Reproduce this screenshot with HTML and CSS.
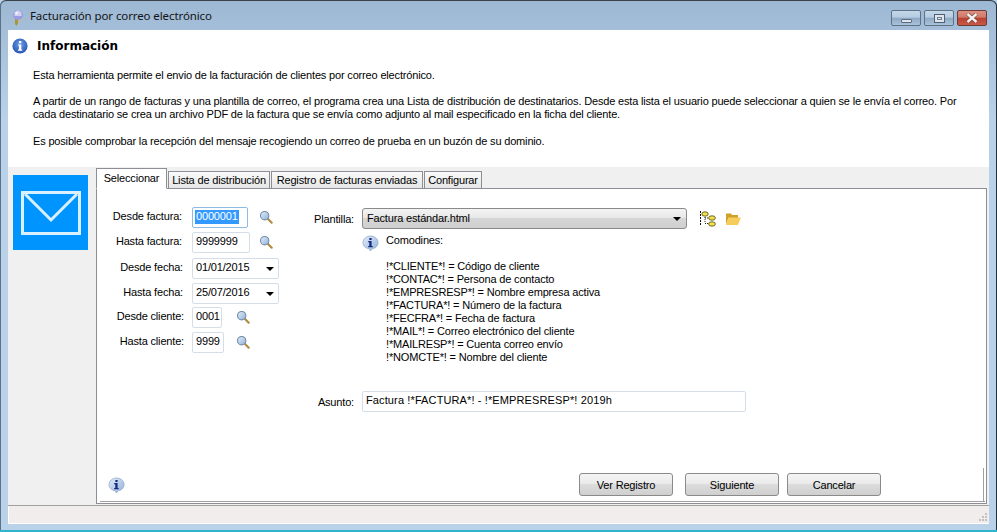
FILE: index.html
```html
<!DOCTYPE html>
<html lang="es">
<head>
<meta charset="utf-8">
<title>Facturación por correo electrónico</title>
<link rel="stylesheet" href="styles.css">
</head>
<body>
<div class="window">
  <header class="titlebar">
    <svg class="app-icon" width="12" height="17" viewBox="0 0 12 17"><path d="M3 10h3v4l-1.5 3L3 15z" fill="#a3983c"/><path d="M6 11l4-1v2l-4 2z" fill="#bdb9a4"/><circle cx="6" cy="6" r="5" fill="#9c9ce0"/><path d="M2.5 3.5L6 1l3.5 2.5V7h-7z" fill="#cfcff0"/><circle cx="4.6" cy="4" r="1.5" fill="#f0f0fb"/></svg>
    <span class="title-text">Facturación por correo electrónico</span>
    <div class="caption-buttons">
      <div class="cap cap-min"><span class="glyph-min"></span></div>
      <div class="cap cap-max"><span class="glyph-max"></span></div>
      <div class="cap cap-close"><svg width="14" height="10" viewBox="0 0 14 10"><path d="M2.5 1L11.5 9M11.5 1L2.5 9" stroke="#5e3833" stroke-width="3.6" fill="none"/><path d="M2.5 1L11.5 9M11.5 1L2.5 9" stroke="#f4f0f0" stroke-width="2.4" fill="none"/></svg></div>
    </div>
  </header>
  <div class="client">
    <section class="info">
      <div class="info-head">
        <svg width="16" height="16" viewBox="0 0 16 16"><defs><radialGradient id="ib" cx="50%" cy="40%" r="65%"><stop offset="0" stop-color="#6f9fe8"/><stop offset="1" stop-color="#1f4fb0"/></radialGradient></defs><circle cx="8" cy="8" r="7.6" fill="url(#ib)"/><rect x="6.9" y="3" width="2.4" height="2.2" fill="#fff"/><path d="M6 6.4h3.3v5.2h1v1.2H6v-1.2h1V7.6H6z" fill="#fff"/></svg>
        <h1>Información</h1>
      </div>
      <p class="p1">Esta herramienta permite el envio de la facturación de clientes por correo electrónico.</p>
      <p class="p2">A partir de un rango de facturas y una plantilla de correo, el programa crea una Lista de distribución de destinatarios. Desde esta lista el usuario puede seleccionar a quien se le envía el correo. Por cada destinatario se crea un archivo PDF de la factura que se envía como adjunto al mail especificado en la ficha del cliente.</p>
      <p class="p3">Es posible comprobar la recepción del mensaje recogiendo un correo de prueba en un buzón de su dominio.</p>
    </section>
    <div class="main">
      <aside class="side">
        <div class="mail-tile"><svg width="60" height="44" viewBox="0 0 60 44"><rect x="1.5" y="1.5" width="57" height="41" fill="none" stroke="#d8f0ff" stroke-width="3"/><path d="M4 3l26 26L56 3" fill="none" stroke="#d8f0ff" stroke-width="3"/></svg></div>
      </aside>
      <div class="tabs-area">
        <nav class="tabs">
          <div class="tab active">Seleccionar</div>
          <div class="tab t-lista">Lista de distribución</div>
          <div class="tab t-reg">Registro de facturas enviadas</div>
          <div class="tab t-conf">Configurar</div>
        </nav>
        <div class="panel">
          <div class="panel-body">
            <div class="form">
              <div class="col-left">
                <div class="row"><label class="lab l1">Desde factura:</label><div class="field w-sel"><span class="sel">0000001</span></div><svg class="lens g11" viewBox="0 0 16 16"><use href="#lens"/></svg></div>
                <div class="row r2"><label class="lab l1">Hasta factura:</label><div class="field w-58">9999999</div><svg class="lens g9" viewBox="0 0 16 16"><use href="#lens"/></svg></div>
                <div class="row r3"><label class="lab l2">Desde fecha:</label><div class="field w-87 date"><span class="date-text">01/01/2015</span><i class="arrow"></i></div></div>
                <div class="row r4"><label class="lab l2">Hasta fecha:</label><div class="field w-87 date"><span class="date-text">25/07/2016</span><i class="arrow"></i></div></div>
                <div class="row r5"><label class="lab l3">Desde cliente:</label><div class="field w-30">0001</div><svg class="lens g14" viewBox="0 0 16 16"><use href="#lens"/></svg></div>
                <div class="row r6"><label class="lab l3">Hasta cliente:</label><div class="field w-32">9999</div><svg class="lens g12" viewBox="0 0 16 16"><use href="#lens"/></svg></div>
              </div>
              <div class="col-right">
                <div class="tpl-row">
                  <label class="lab-tpl">Plantilla:</label>
                  <div class="combo"><span class="combo-text">Factura estándar.html</span><i class="arrow"></i></div>
                  <svg class="tree" width="18" height="16" viewBox="0 0 18 16"><path d="M1.5 0v15" stroke="#111" stroke-dasharray="2 1" fill="none"/><path d="M6 4v8M6 7h4M6 12.5h4" stroke="#222" stroke-dasharray="1 1" fill="none"/><ellipse cx="6" cy="3" rx="3.2" ry="2.2" fill="#f4e04a" stroke="#5a5a20" stroke-width=".9"/><ellipse cx="13" cy="7" rx="3.4" ry="2.2" fill="#f4e04a" stroke="#5a5a20" stroke-width=".9"/><ellipse cx="13" cy="13" rx="3.4" ry="2.2" fill="#f4e04a" stroke="#5a5a20" stroke-width=".9"/></svg>
                  <svg class="folder" width="16" height="14" viewBox="0 0 16 14"><path d="M1 1.5h5l1 1.5h6v3H3.5L1 12.5z" fill="#cfa02c"/><path d="M3.5 5.5H16L13 13H1z" fill="#f6cd5a"/></svg>
                </div>
                <div class="wild">
                  <svg class="bubble" width="17" height="17" viewBox="0 0 17 17"><use href="#bubble"/></svg>
                  <div class="wild-text">
                    <div class="wild-title">Comodines:</div>
                    <div>!*CLIENTE*! = Código de cliente</div>
                    <div>!*CONTAC*! = Persona de contacto</div>
                    <div>!*EMPRESRESP*! = Nombre empresa activa</div>
                    <div>!*FACTURA*! = Número de la factura</div>
                    <div>!*FECFRA*! = Fecha de factura</div>
                    <div>!*MAIL*! = Correo electrónico del cliente</div>
                    <div>!*MAILRESP*! = Cuenta correo envío</div>
                    <div>!*NOMCTE*! = Nombre del cliente</div>
                  </div>
                </div>
                <div class="subject-row">
                  <label class="lab-sub">Asunto:</label>
                  <div class="field subject">Factura !*FACTURA*! - !*EMPRESRESP*! 2019h</div>
                </div>
              </div>
            </div>
            <div class="actions">
              <svg class="bubble" width="17" height="17" viewBox="0 0 17 17"><use href="#bubble"/></svg>
              <div class="buttons">
                <button class="btn" type="button">Ver Registro</button>
                <button class="btn" type="button">Siguiente</button>
                <button class="btn" type="button">Cancelar</button>
              </div>
            </div>
          </div>
        </div>
      </div>
    </div>
    <footer class="status">
      <svg class="grip" width="9" height="9" viewBox="0 0 9 9"><path d="M6 0h2v2H6zM3 3h2v2H3zM6 3h2v2H6zM0 6h2v2H0zM3 6h2v2H3zM6 6h2v2H6z" fill="#c4c0bd"/></svg>
    </footer>
  </div>
</div>
<svg class="defs" width="0" height="0">
  <defs>
    <linearGradient id="lg" x1="0" y1="0" x2="1" y2="1"><stop offset="0" stop-color="#e4eefa"/><stop offset="1" stop-color="#8fb0d8"/></linearGradient>
    <g id="lens"><path d="M9.5 9.5L14.5 14.5" stroke="#b08a40" stroke-width="2.4" stroke-linecap="round"/><circle cx="6.5" cy="6.5" r="4.8" fill="url(#lg)" stroke="#6f8aa8" stroke-width="1.2"/></g>
    <g id="bubble"><path d="M8.5 1C12.6 1 16 3.6 16 7.5S12.8 13.6 10.5 13.6L8.3 16 7.4 13.6C3.6 13.4 1 11 1 7.5S4.4 1 8.5 1z" fill="url(#lg)" stroke="#93a9c8" stroke-width=".8"/><rect x="7.4" y="3" width="2.2" height="2" fill="#142a80"/><path d="M6.2 6h3.4v5h1.1v1.2H6.2V11h1.1V7.2H6.2z" fill="#142a80"/></g>
  </defs>
</svg>
</body>
</html>
```
FILE: styles.css
```css
* { box-sizing: border-box; }
html, body { margin: 0; padding: 0; height: 100%; overflow: hidden; }
body { font-family: "Liberation Sans", Arial, sans-serif; font-size: 11px; letter-spacing: -0.17px; color: #000; background: #b9d2ea; }
.defs { position: absolute; }
.window { width: 997px; height: 532px; display: flex; flex-direction: column; padding: 0 8px 6px; background: linear-gradient(#9db8d3 0, #a5bfda 30px, #b9d2ea 120px); border-top: 1px solid #3a4048; border-bottom: 2px solid #2fb4cf; border-radius: 6px 6px 0 0; box-shadow: inset 1px 0 0 #5b7186, inset -1px 0 0 #22303a; }
.titlebar { height: 29px; flex: none; display: flex; align-items: center; }
.app-icon { margin: 3px 6px 0 4px; flex: none; }
.title-text { font-size: 11.5px; letter-spacing: -0.1px; color: #141414; font-family: "Noto Sans", sans-serif; }
.caption-buttons { margin-left: auto; margin-right: 2px; display: flex; gap: 3px; align-self: flex-start; margin-top: 9px; }
.cap { height: 16px; width: 30px; border: 1px solid #5f7285; border-radius: 2px; display: flex; align-items: center; justify-content: center; background: linear-gradient(#c6d8ea 0, #b4cbe1 45%, #8fa9c4 50%, #a9c3dc 100%); }
.cap-close { background: linear-gradient(#dc8f80 0, #cf7a6a 45%, #b9402e 50%, #c85a46 100%); border-color: #6d3a35; }
.glyph-min { display: block; width: 11px; height: 4px; margin-top: 5px; background: #dde5ee; border: 1px solid #5b6b7c; border-radius: 1px; }
.glyph-max { display: block; width: 11px; height: 9px; border: 1px solid #4f6072; background: #dde5ee; box-shadow: inset 0 0 0 2px #dde5ee, inset 0 0 0 3px #6b7d90; }
.client { flex: 1; min-height: 0; display: flex; flex-direction: column; background: #f0f0f0; }
.info { height: 137px; flex: none; background: #fff; padding: 8px 0 0 4px; }
.info-head { display: flex; align-items: center; gap: 9px; height: 16px; }
.info-head h1 { margin: 0; font: bold 12px "DejaVu Sans", sans-serif; letter-spacing: 0; }
.info p { margin: 14px 0 0; padding-left: 21px; line-height: 13px; width: 960px; }
.info .p1 { margin-top: 15px; }
.info .p2 { margin-top: 13px; }
.main { flex: 1; min-height: 0; display: flex; background: #f0f0f0; border-bottom: 1px solid #a0a0a0; }
.side { width: 88px; flex: none; padding: 8px 0 0 5px; }
.mail-tile { width: 75px; height: 75px; background: #0094fe; display: flex; align-items: center; justify-content: center; }
.tabs-area { flex: 1; min-width: 0; display: flex; flex-direction: column; margin: 1px 2px 1px 0; }
.tabs { display: flex; gap: 1px; height: 21px; flex: none; position: relative; z-index: 1; }
.tab { height: 18px; margin-top: 3px; border: 1px solid #8c8f96; background: linear-gradient(#fafafa, #e6e6e6); line-height: 16px; text-align: center; white-space: nowrap; }
.tab.active { width: 71px; height: 21px; margin-top: 0; background: #fff; border-bottom-color: #fff; line-height: 18px; }
.t-lista { width: 102px; }
.t-reg { width: 152px; }
.t-conf { width: 58px; }
.panel { flex: 1; min-height: 0; background: #fff; border: 1px solid #8c8f96; margin-top: -1px; padding: 0 1px 1px 3px; }
.panel-body { height: 100%; display: flex; flex-direction: column; border-bottom: 1px solid #a0a0a0; }
.form { display: flex; flex: 1; min-height: 0; padding-top: 18px; }
.col-left { width: 196px; flex: none; }
.row { display: flex; align-items: center; height: 21px; }
.r2 { margin-top: 4px; }
.r3 { margin-top: 5px; }
.r4 { margin-top: 4px; }
.r5 { margin-top: 3px; }
.r6 { margin-top: 4px; }
.lab { text-align: right; flex: none; padding-bottom: 4px; }
.l1 { width: 82px; margin-right: 10px; }
.l2 { width: 83px; margin-right: 9px; }
.l3 { width: 84px; margin-right: 8px; }
.field { height: 21px; background: #fff; border: 1px solid #d4dee9; border-radius: 2px; padding: 2px 3px 3px; line-height: 13px; white-space: nowrap; flex: none; }
.w-sel { width: 56px; border-color: #8fbbe0; padding-left: 2px; }
.sel { background: #3399ff; color: #fff; padding: 0 1px; display: inline-block; height: 14px; }
.w-58 { width: 58px; }
.w-87 { width: 87px; }
.w-30 { width: 30px; }
.w-32 { width: 32px; }
.lens { width: 14px; height: 14px; flex: none; margin-top: -2px; }
.g9 { margin-left: 9px; }
.g11 { margin-left: 11px; }
.g12 { margin-left: 12px; }
.g14 { margin-left: 14px; }
.arrow { display: block; flex: none; width: 0; height: 0; border: 4px solid transparent; border-top: 4px solid #000; border-bottom: 0; }
.date { display: flex; align-items: center; justify-content: space-between; padding: 0 4px 0 3px; }
.date-text { margin-top: -2px; }
.col-right { flex: 1; min-width: 0; padding-top: 1px; }
.tpl-row { display: flex; align-items: center; height: 21px; }
.lab-tpl { width: 58px; text-align: right; flex: none; margin-right: 8px; }
.combo { width: 325px; height: 21px; border: 1px solid #8a8a8a; border-radius: 3px; background: linear-gradient(#f4f4f4 0, #e8e8e8 45%, #d6d6d6 50%, #cfcfcf 100%); display: flex; align-items: center; justify-content: space-between; padding: 0 5px 0 4px; }
.combo-text { margin-top: -2px; }
.tree { margin-left: 12px; flex: none; }
.folder { margin-left: 8px; flex: none; }
.wild { display: flex; margin-left: 66px; padding-top: 6px; }
.bubble { flex: none; }
.wild-text { margin: -1px 0 0 7px; line-height: 13px; }
.wild-title { margin-bottom: 13px; }
.subject-row { display: flex; align-items: center; margin-top: 27px; }
.lab-sub { width: 58px; text-align: right; margin-right: 8px; flex: none; }
.subject { width: 384px; letter-spacing: 0.12px; }
.actions { height: 33px; flex: none; display: flex; align-items: flex-start; justify-content: space-between; padding: 5px 0 0 8px; border-right: 1px solid #a0a0a0; margin-right: 1px; }
.actions .bubble { margin-top: 4px; }
.buttons { display: flex; gap: 12px; margin-right: 102px; }
.btn { width: 94px; height: 23px; font: inherit; letter-spacing: inherit; color: #000; border: 1px solid #8a8a8a; border-radius: 3px; background: linear-gradient(#f4f4f4 0, #ebebeb 45%, #dcdcdc 50%, #cfcfcf 100%); padding: 0; }
.btn:last-child { margin-left: -4px; }
.status { height: 18px; flex: none; background: #f0edec; border-bottom: 1px solid #fff; border-left: 1px solid #fff; display: flex; justify-content: flex-end; align-items: flex-end; padding: 0 1px 1px 0; }
```
